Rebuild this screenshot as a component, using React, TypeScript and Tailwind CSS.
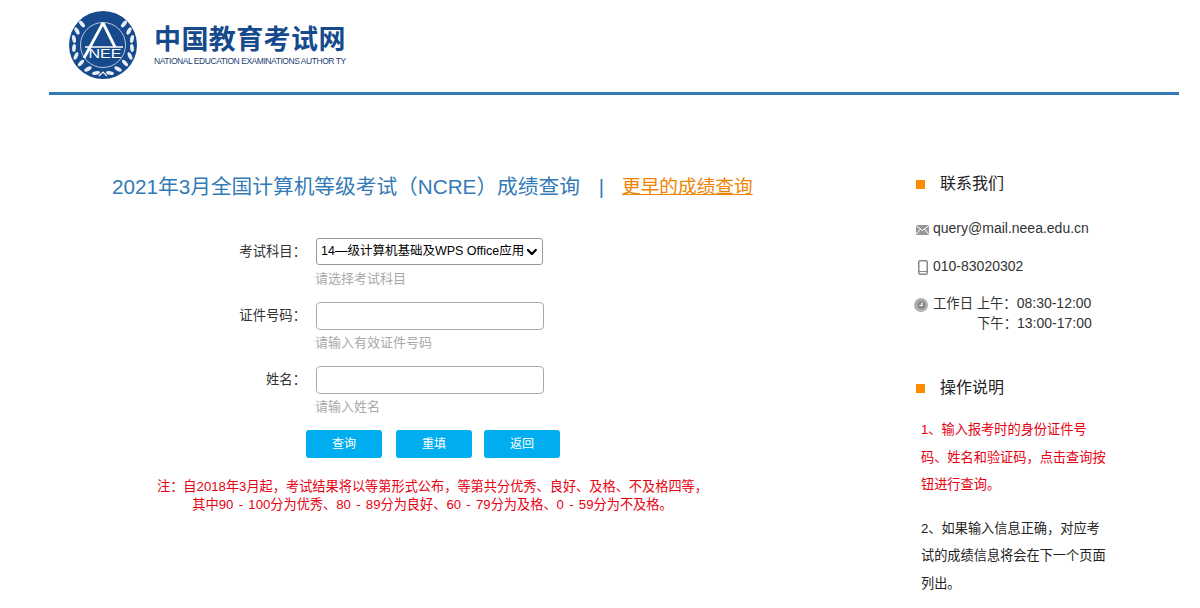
import { ChevronDown } from "lucide-react";

const FONT = "font-['Liberation_Sans','Noto_Sans_CJK_SC',sans-serif]";

function Logo() {
  // wreath leaves: x, y, rotation
  const leaves = [
    [-21, -21, -40], [-26, -14, -28], [-29, -6, -12], [-29, 3, 6], [-27, 11, 24], [-22, 18, 42], [-15, 24, 62], [-7, 28, 78],
    [21, -21, 40], [26, -14, 28], [29, -6, 12], [29, 3, -6], [27, 11, -24], [22, 18, -42], [15, 24, -62], [7, 28, -78],
  ];
  return (
    <svg width="68" height="68" viewBox="-34 -34 68 68" className="shrink-0">
      <circle r="34" fill="#164a8c" />
      <circle r="22.5" fill="none" stroke="#dfe8f2" strokeWidth="0.8" />
      {leaves.map(([x, y, r], i) => (
        <ellipse key={i} cx={x} cy={y} rx="1.9" ry="4" fill="#e8eef5" transform={`rotate(${r} ${x} ${y})`} />
      ))}
      <path d="M0 -22 L-19 13 M0 -22 L12 2" stroke="#fff" strokeWidth="2.8" fill="none" />
      <path d="M-18 2 H20" stroke="#fff" strokeWidth="1.6" />
      <text x="2" y="13" textAnchor="middle" fill="#fff" fontSize="13" fontFamily="Liberation Sans" textLength="33" lengthAdjust="spacingAndGlyphs">NEE</text>
      <path d="M-4 31 L0 27 L4 31" stroke="#fff" strokeWidth="1.1" fill="none" />
    </svg>
  );
}

function FormRow({ label, hint, children }: { label: string; hint: string; children: React.ReactNode }) {
  return (
    <div className="flex">
      <div className="w-[191px] pr-[10px] text-right text-[13.33px] leading-[28px] text-[#333]">{label}</div>
      <div>
        {children}
        <p className="-ml-px mt-[4px] text-[13px] leading-[18px] text-[#a9a9a9]">{hint}</p>
      </div>
    </div>
  );
}

function Btn({ children, className }: { children: string; className: string }) {
  return (
    <button className={`h-[28px] w-[76px] rounded-[3px] bg-[#00aeef] text-[12px] text-white ${className}`}>{children}</button>
  );
}

function SideHead({ children }: { children: string }) {
  return (
    <div className="flex items-center">
      <span className="h-[9px] w-[9px] bg-[#ff8c00]" />
      <h3 className="ml-[15px] text-[16px] leading-[24px] text-[#222]">{children}</h3>
    </div>
  );
}

export default function App() {
  return (
    <div className={`mx-auto h-[608px] w-[1200px] overflow-hidden bg-white ${FONT}`}>
      <header className="ml-[49px] mr-[21px] h-[95px] border-b-[3px] border-[#337ab7] pl-[20px] pt-[11px]">
        <div className="flex items-start">
          <Logo />
          <div className="ml-[17px] pt-[14px]">
            <div className="text-[27px] font-bold leading-[30px] tracking-[0.4px] text-[#164a8c]">中国教育考试网</div>
            <div className="mt-px whitespace-nowrap text-[8.5px] leading-[10px] tracking-[-0.45px] text-[#1c3f73]">NATIONAL EDUCATION EXAMINATIONS AUTHOR TY</div>
          </div>
        </div>
      </header>

      <div className="flex">
        <main className="ml-[112px] w-[804px]">
          <div className="flex items-center whitespace-nowrap pt-[77px] text-[20.7px] leading-[30px] text-[#337ab7]">
            <h1 className="font-normal">2021年3月全国计算机等级考试（NCRE）成绩查询</h1>
            <span className="ml-[19px] text-[20px]">|</span>
            <a className="ml-[18px] text-[18.67px] text-[#f08300] underline">更早的成绩查询</a>
          </div>

          <div className="ml-[13px] mt-[36px] flex flex-col gap-[14px]">
            <FormRow label="考试科目：" hint="请选择考试科目">
              <div className="pb-px">
                <div className="flex h-[27px] w-[227px] items-center rounded-[3px] border border-[#999] pl-[4px] text-[12.5px] text-black">
                  <span className="flex-1 whitespace-nowrap">14—级计算机基础及WPS Office应用</span>
                  <ChevronDown size={16} strokeWidth={3.5} className="mr-[2px]" />
                </div>
              </div>
            </FormRow>
            <FormRow label="证件号码：" hint="请输入有效证件号码">
              <input className="block h-[28px] w-[228px] rounded-[4px] border border-[#aaa]" />
            </FormRow>
            <FormRow label="姓名：" hint="请输入姓名">
              <input className="block h-[28px] w-[228px] rounded-[4px] border border-[#aaa]" />
            </FormRow>
          </div>

          <div className="ml-[194px] mt-[14px] flex">
            <Btn className="">查询</Btn>
            <Btn className="ml-[14px]">重填</Btn>
            <Btn className="ml-[12px]">返回</Btn>
          </div>

          <p className="mt-[20px] w-[641px] text-center text-[13.2px] leading-[18px] text-[#e60012]">
            注：自2018年3月起，考试结果将以等第形式公布，等第共分优秀、良好、及格、不及格四等，
            <br />
            <span className="[word-spacing:1.6px]">其中90 - 100分为优秀、80 - 89分为良好、60 - 79分为及格、0 - 59分为不及格。</span>
          </p>
        </main>

        <aside className="w-[200px] pt-[77px]">
          <SideHead>联系我们</SideHead>
          <div className="mt-[22px] flex items-center text-[14px] leading-[20px] text-[#333]">
            <svg width="13" height="10" viewBox="0 0 13 10" className="mt-[4px] shrink-0"><rect width="13" height="10" fill="#999" /><path d="M0 0.5 L6.5 5.5 L13 0.5 M0 9.5 L4.5 4 M13 9.5 L8.5 4" stroke="#fff" strokeWidth="1" fill="none" /></svg>
            <span className="ml-[4px]">query@mail.neea.edu.cn</span>
          </div>
          <div className="mt-[18px] flex items-center text-[14px] leading-[20px] text-[#333]">
            <svg width="10" height="15" viewBox="0 0 10 15" className="ml-[2px] mt-[2px] shrink-0"><rect x="0.75" y="0.75" width="8.5" height="13.5" rx="1.5" fill="none" stroke="#888" strokeWidth="1.5" /><path d="M1 11.5 H9" stroke="#888" /></svg>
            <span className="ml-[5px]">010-83020302</span>
          </div>
          <div className="mt-[17px] flex text-[14px] leading-[20px] text-[#333]">
            <svg width="14" height="14" viewBox="0 0 14 14" className="-ml-[2px] mt-[5px] shrink-0"><circle cx="7" cy="7" r="7" fill="#b0b0b0" /><circle cx="7.5" cy="7" r="4" fill="#888" /><path d="M8 4.5 V7.5 H5.5" stroke="#fff" strokeWidth="1.2" fill="none" /></svg>
            <div className="ml-[5px]">
              <div className="h-[20px]"><span className="text-[13.33px]">工作日 上午：</span>08:30-12:00</div>
              <div className="pl-[44px]"><span className="text-[13.33px]">下午：</span>13:00-17:00</div>
            </div>
          </div>

          <div className="mt-[42px]">
            <SideHead>操作说明</SideHead>
          </div>
          <p className="ml-[5px] mt-[16px] w-[187px] text-[13.2px] leading-[27.5px] text-[#e60012]">
            1、输入报考时的身份证件号码、姓名和验证码，点击查询按钮进行查询。
          </p>
          <p className="ml-[5px] mt-[16px] w-[187px] text-[13.2px] leading-[27.5px] text-[#222]">
            2、如果输入信息正确，对应考试的成绩信息将会在下一个页面列出。
          </p>
        </aside>
      </div>
    </div>
  );
}
